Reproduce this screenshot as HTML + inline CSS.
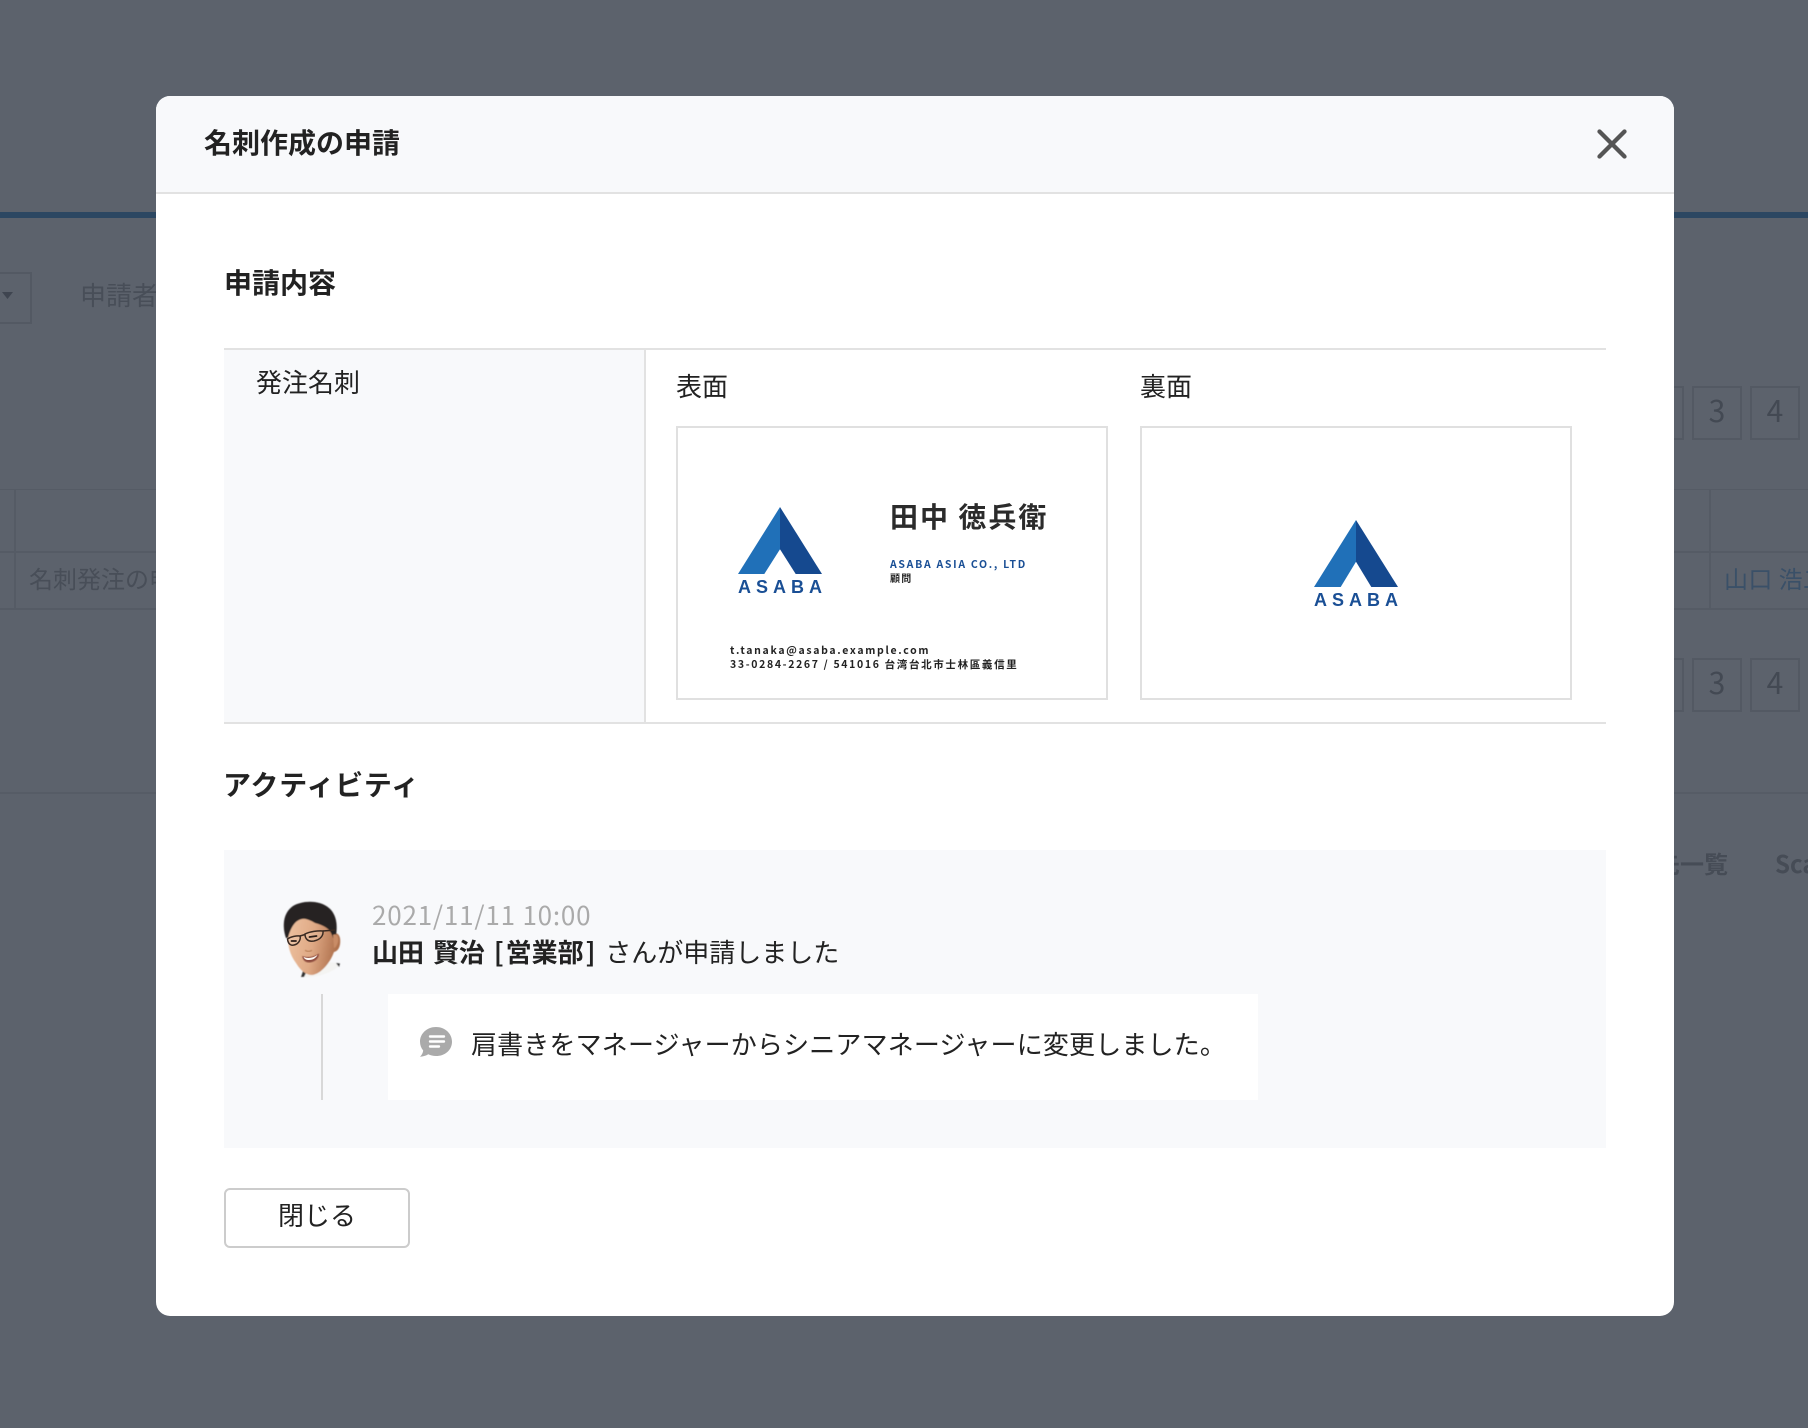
<!DOCTYPE html>
<html lang="ja"><head><meta charset="utf-8"><title>名刺作成の申請</title>
<style>
html,body{margin:0;padding:0}
body{width:1808px;height:1428px;position:relative;overflow:hidden;background:#5c626c;font-family:"Liberation Sans","Noto Sans CJK JP",sans-serif;color:#222}
.a{position:absolute;white-space:nowrap}
.j{font-family:"Noto Sans CJK JP",sans-serif}
.bg{color:#484e58;font-size:26px;line-height:36px}
.pg{width:46px;height:50px;border:2px solid #535963;color:#434953;text-align:center;font-size:30px;line-height:42px;font-family:"Noto Sans CJK JP",sans-serif}
.h{font-size:28px;font-weight:700;line-height:40px;color:#222}
.t{font-size:26px;line-height:36px;color:#222}
.card{position:absolute;top:426px;width:428px;height:270px;border:2px solid #e0e0e0;background:#fff}
</style></head><body>
<!-- dimmed page behind -->
<div class="a" style="left:0;top:212px;width:1808px;height:6px;background:#2c4762"></div>
<div class="a" style="left:-20px;top:272px;width:48px;height:48px;border:2px solid #535963"></div>
<svg class="a" style="left:0;top:291px" width="16" height="10"><path d="M2 1h11l-5.500 7z" fill="#3f4550"/></svg>
<div class="a j bg" style="left:80px;top:277px">申請者</div>
<div class="a" style="left:0;top:489px;width:1808px;height:1px;background:#555b65"></div>
<div class="a" style="left:0;top:551px;width:1808px;height:2px;background:#555b65"></div>
<div class="a" style="left:0;top:608px;width:1808px;height:2px;background:#555b65"></div>
<div class="a" style="left:14px;top:489px;width:2px;height:120px;background:#555b65"></div>
<div class="a" style="left:1709px;top:489px;width:2px;height:120px;background:#555b65"></div>
<div class="a j bg" style="left:29px;top:560px;font-size:24px">名刺発注の申</div>
<div class="a j bg" style="left:1724px;top:560px;font-size:24px;color:#3a5068;letter-spacing:.4px">山口 浩二</div>
<div class="a" style="left:1634px;top:792px;width:174px;height:2px;background:#565c66"></div>
<div class="a" style="left:0;top:792px;width:160px;height:2px;background:#565c66"></div>
<div class="a pg" style="left:1634px;top:386px"></div>
<div class="a pg" style="left:1692px;top:386px">3</div>
<div class="a pg" style="left:1750px;top:386px">4</div>
<div class="a pg" style="left:1634px;top:658px"></div>
<div class="a pg" style="left:1692px;top:658px">3</div>
<div class="a pg" style="left:1750px;top:658px">4</div>
<div class="a j" style="left:1608px;top:846px;font-size:24px;line-height:34px;font-weight:700;color:#464c56">送付先一覧</div>
<div class="a j" style="left:1775px;top:846px;font-size:24px;line-height:34px;font-weight:700;color:#464c56">Scan</div>

<!-- modal -->
<div class="a" style="left:156px;top:96px;width:1518px;height:1220px;background:#fff;border-radius:14px;overflow:hidden">
  <div style="height:96px;background:#f8f9fb;border-bottom:2px solid #e2e2e2"></div>
</div>
<div class="a j h" style="left:204px;top:122px">名刺作成の申請</div>
<svg class="a" style="left:1596px;top:128px" width="32" height="32" viewBox="0 0 32 32"><path d="M3.500 3.500 28.500 28.500M28.500 3.500 3.500 28.500" stroke="#555" stroke-width="4.300" stroke-linecap="round" fill="none"/></svg>

<div class="a j h" style="left:224px;top:262px">申請内容</div>

<div class="a" style="left:224px;top:348px;width:1382px;height:2px;background:#e2e2e2"></div>
<div class="a" style="left:224px;top:350px;width:420px;height:372px;background:#f8f9fb"></div>
<div class="a" style="left:644px;top:350px;width:2px;height:372px;background:#e2e2e2"></div>
<div class="a" style="left:224px;top:722px;width:1382px;height:2px;background:#e2e2e2"></div>
<div class="a j t" style="left:256px;top:364px">発注名刺</div>
<div class="a j t" style="left:676px;top:368px">表面</div>
<div class="a j t" style="left:1140px;top:368px">裏面</div>

<div class="card" style="left:676px"></div>
<div class="card" style="left:1140px"></div>

<svg class="a" style="left:730px;top:500px" width="100" height="80" viewBox="730 500 100 80">
  <path d="M780 507 738 574H764.300L780 549.300Z" fill="#2070b8"/>
  <path d="M780 507 822 574H795.700L780 549.300Z" fill="#15498f"/>
</svg>
<div class="a" style="left:738px;top:576px;font-size:18px;line-height:22px;font-weight:700;color:#1a4f95;letter-spacing:5px">ASABA</div>

<svg class="a" style="left:1306px;top:515px" width="100" height="80" viewBox="1306 515 100 80">
  <path d="M1356 520 1314 587H1340.700L1356 561.700Z" fill="#2070b8"/>
  <path d="M1356 520 1398 587H1371.300L1356 561.700Z" fill="#15498f"/>
</svg>
<div class="a" style="left:1314px;top:589px;font-size:18px;line-height:22px;font-weight:700;color:#1a4f95;letter-spacing:5px">ASABA</div>

<div class="a j" style="left:890px;top:496px;font-size:28px;line-height:40px;font-weight:700;letter-spacing:2px;color:#2b2b2b">田中 徳兵衛</div>
<div class="a j" style="left:890px;top:557px;font-size:10.500px;line-height:16px;font-weight:700;letter-spacing:1.700px;color:#1a4f95">ASABA ASIA CO., LTD</div>
<div class="a j" style="left:890px;top:571px;font-size:10px;line-height:14px;font-weight:700;letter-spacing:1.200px;color:#2b2b2b">顧問</div>
<div class="a j" style="left:730px;top:643px;font-size:10.500px;line-height:15px;font-weight:700;letter-spacing:1.680px;color:#222">t.tanaka@asaba.example.com</div>
<div class="a j" style="left:730px;top:657px;font-size:10.500px;line-height:15px;font-weight:700;letter-spacing:1.660px;color:#222">33-0284-2267 / 541016 台湾台北市士林區義信里</div>

<div class="a j h" style="left:223px;top:764px;letter-spacing:.8px">アクティビティ</div>

<div class="a" style="left:224px;top:850px;width:1382px;height:298px;background:#f8f9fb"></div>

<svg class="a" style="left:278px;top:896px" width="68" height="88" viewBox="278 896 68 88">
  <defs>
    <linearGradient id="sk" x1="0" y1="0" x2="1" y2="0.200"><stop offset="0" stop-color="#eec3a2"/><stop offset=".55" stop-color="#dfa985"/><stop offset="1" stop-color="#b0724e"/></linearGradient>
    <filter id="bl" x="-5%" y="-5%" width="110%" height="110%"><feGaussianBlur stdDeviation=".45"/></filter>
  </defs>
  <g filter="url(#bl)">
    <path d="M301 977 303 971 330 962 340 963.500 339 966 C330 974 315 978 301 977Z" fill="#f4f4f2"/>
    <path d="M301 977 303 971 306 973 304 977ZM336 963 340 963.500 339 967Z" fill="#333"/>
    <path d="M288 932 C287 945 290 955 296 963 C301 971 306 975 312 975 C321 974 330 963 334 952 C339 951 341 945 340 938 C339 933 335 932 333 935 L332 915 L295 912Z" fill="url(#sk)"/>
    <path d="M286 938 C282 926 283 913 293 906 C303 900 320 900 329 908 C336 914 338 924 336 936 L333 938 C332 934 330 931 328 929 C323 925 318 924 315 923 C310 920 305 918 302 919 C296 920 291 926 288 938Z" fill="#252223"/>
    <path d="M333 935 C336 933 339 936 338 942 C337 946 335 948 334 948Z" fill="#c98c66"/>
  </g>
  <g fill="none" stroke="#3a2a22" stroke-width="1.500">
    <path d="M287.500 939 C291 936.500 297 935.500 300 936 C301 939 299 944 294 945 C290 946 288 943 287.500 939Z" fill="#f0d2bc" fill-opacity=".25"/>
    <path d="M305 934 C310 931.500 318 930.500 323 931 C323.500 935 321 939.500 314 941 C308 942 305 939 305 934Z" fill="#f0d2bc" fill-opacity=".25"/>
    <path d="M300 936 305 934.500M323 931 335 930"/>
  </g>
  <path d="M291.500 941h4.500M309.500 937l7-1" stroke="#2a1d18" stroke-width="1.800" stroke-linecap="round"/>
  <path d="M305 950 C307 952 310 952 312 950" stroke="#b98058" stroke-width="1.200" fill="none" filter="url(#bl)"/>
  <path d="M302 956 C308 958 314 957 319 953.500 C319 959 314 962.500 309 962.500 C305 962.500 303 960 302 956Z" fill="#8f4d40" filter="url(#bl)"/>
  <path d="M303.500 957 C308 958.800 313 958 317.500 955 C316 958 313 960 309 960 C306 960 304.500 959 303.500 957Z" fill="#fdf8f3"/>
</svg>

<div class="a j" style="left:372px;top:897px;font-size:26px;line-height:36px;color:#aaa;letter-spacing:.8px">2021/11/11 10:00</div>
<div class="a j t" style="left:372px;top:934px"><b style="font-weight:700;word-spacing:3px">山田 賢治 <span style="letter-spacing:2px">[</span>営業部<span style="padding-left:2px">]</span></b><span style="margin-left:4px"> さんが申請しました</span></div>

<div class="a" style="left:321px;top:994px;width:2px;height:106px;background:#d8d8d8"></div>
<div class="a" style="left:388px;top:994px;width:870px;height:106px;background:#fff"></div>
<svg class="a" style="left:420px;top:1027px" width="32" height="30" viewBox="0 0 32 30">
  <path d="M16 0C25 0 32 6.500 32 14.700 32 23 25 29 16 29 13 29 10.500 28.400 8.300 27.300 5.500 29 3 29.600 0 29.700 2 27.800 3 25.500 3.200 23.500 1.200 21 0 18 0 14.700 0 6.500 7 0 16 0Z" fill="#aaa"/>
  <path d="M10 9.500h14M10 14.500h14M10 19.500h9" stroke="#fff" stroke-width="2.400" stroke-linecap="round"/>
</svg>
<div class="a j t" style="left:471px;top:1026px;letter-spacing:.16px">肩書きをマネージャーからシニアマネージャーに変更しました。</div>

<div class="a j t" style="left:224px;top:1188px;width:182px;height:56px;border:2px solid #ccc;border-radius:6px;background:#fff"></div>
<div class="a j t" style="left:224px;top:1197px;width:186px;text-align:center">閉じる</div>
</body></html>
